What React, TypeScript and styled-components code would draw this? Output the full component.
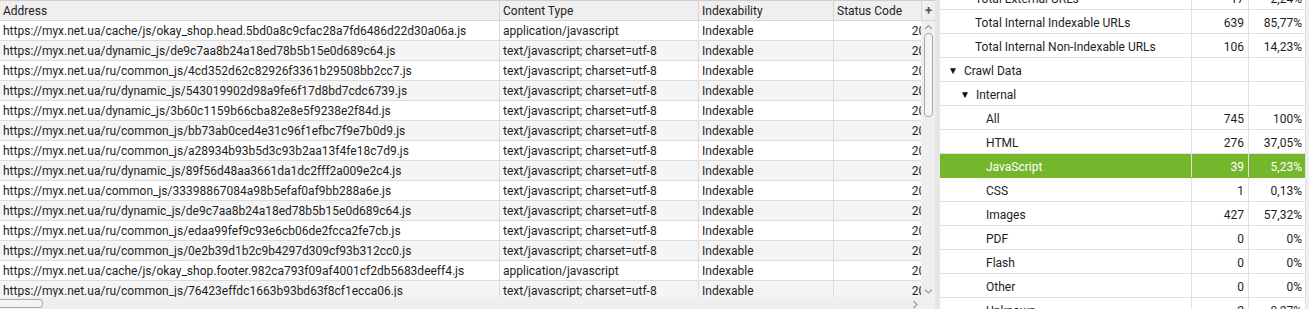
import React from 'react';
import styled, { createGlobalStyle, css } from 'styled-components';

const GlobalStyle = createGlobalStyle`
  html, body {
    margin: 0;
    padding: 0;
    overflow: hidden;
    background: #f0f0f0;
  }
  body {
    font-family: Roboto, "Liberation Sans", Arial, sans-serif;
    font-size: 12px;
    color: #1e1e1e;
  }
`;

const COLS = '500px 199px 135px 103px';

const Page = styled.div`
  display: flex;
  width: 1309px;
  height: 309px;
  background: #f0f0f0;
`;

const LeftPane = styled.div`
  display: flex;
  flex-direction: column;
  width: 935px;
  flex-shrink: 0;
`;

const TableArea = styled.div`
  display: flex;
  height: 297px;
`;

const Viewport = styled.div`
  width: 921px;
  overflow: hidden;
  background: #fff;
`;

const HeaderRow = styled.div`
  display: grid;
  grid-template-columns: ${COLS};
  height: 21px;
  box-sizing: border-box;
  border-top: 1px solid #cfcfcf;
  border-bottom: 1px solid #d6d6d6;
  background: #efefef;
`;

const HeaderCell = styled.div`
  display: flex;
  align-items: center;
  padding: 1px 3px 0;
  border-right: 1px solid #d6d6d6;
  color: #222;
  white-space: nowrap;
  overflow: hidden;
`;

const Row = styled.div<{ $alt: boolean }>`
  display: grid;
  grid-template-columns: ${COLS};
  height: 20px;
  box-sizing: border-box;
  border-bottom: 1px solid #dcdcdc;
  background: ${(p) => (p.$alt ? '#f5f5f5' : '#fff')};
`;

const Cell = styled.div<{ $right?: boolean }>`
  display: flex;
  align-items: center;
  justify-content: ${(p) => (p.$right ? 'flex-end' : 'flex-start')};
  padding: 1px 4px 0 3px;
  border-right: 1px solid #dcdcdc;
  white-space: nowrap;
  overflow: hidden;
`;

const VScroll = styled.div`
  width: 14px;
  display: flex;
  flex-direction: column;
`;

const PlusCell = styled.div`
  height: 21px;
  box-sizing: border-box;
  border-top: 1px solid #cfcfcf;
  border-bottom: 1px solid #d6d6d6;
  border-left: 1px solid #d6d6d6;
  background: #efefef;
  display: flex;
  align-items: center;
  justify-content: center;
  color: #555;
  font-size: 13px;
  font-weight: 700;
`;

const VTrack = styled.div`
  flex: 1;
  display: flex;
  flex-direction: column;
  align-items: center;
  background: #efefef;
  padding: 1px 0 1px;
`;

const Arrow = styled.div`
  height: 10px;
  display: flex;
  align-items: center;
  justify-content: center;
`;

const VThumb = styled.div`
  width: 9px;
  height: 84px;
  margin-top: 1px;
  box-sizing: border-box;
  border: 1px solid #a9a9a9;
  border-radius: 4px;
  background: #f4f4f4;
`;

const Spacer = styled.div`
  flex: 1;
`;

const HScroll = styled.div`
  height: 12px;
  display: flex;
`;

const HTrack = styled.div`
  width: 921px;
  display: flex;
  align-items: center;
  background: #efefef;
`;

const HThumb = styled.div`
  width: 43px;
  height: 9px;
  box-sizing: border-box;
  border: 1px solid #a9a9a9;
  border-left: none;
  border-radius: 0 4px 4px 0;
  background: #f4f4f4;
`;

const HArrow = styled.div`
  width: 12px;
  display: flex;
  justify-content: center;
  padding-top: 2px;
`;

const Splitter = styled.div`
  width: 5px;
  flex-shrink: 0;
  background: #e6e6e6;
`;

const RightPane = styled.div`
  width: 365px;
  flex-shrink: 0;
  background: #fff;
  overflow: hidden;
`;

const RightBody = styled.div`
  margin-top: -14px;
`;

const StatRow = styled.div<{ $selected?: boolean }>`
  display: grid;
  grid-template-columns: 252px 57px 56px;
  height: 24px;
  box-sizing: border-box;
  border-bottom: 1px solid #e0e0e0;
  ${(p) =>
    p.$selected &&
    css`
      background: #74b72d;
      color: #fff;
      border-bottom-color: #74b72d;
    `}
`;

const StatLabel = styled.div<{ $indent: number }>`
  display: flex;
  align-items: center;
  padding: 2px 0 0 ${(p) => p.$indent}px;
  white-space: nowrap;
  overflow: hidden;
  border-right: 1px solid #e0e0e0;
`;

const StatValue = styled.div<{ $last?: boolean }>`
  display: flex;
  align-items: center;
  justify-content: flex-end;
  padding: 2px ${(p) => (p.$last ? 3 : 4)}px 0 0;
  border-right: ${(p) => (p.$last ? 'none' : '1px solid #e0e0e0')};
`;

const Caret = styled.span`
  font-size: 10px;
  margin-right: 6px;
  color: #111;
`;

const SideEdge = styled.div`
  flex: 1;
  background: #f0f0f0;
  border-left: 1px solid #e2e2e2;
`;

type UrlRow = { url: string; type: string };

const rows: UrlRow[] = [
  { url: 'https://myx.net.ua/cache/js/okay_shop.head.5bd0a8c9cfac28a7fd6486d22d30a06a.js', type: 'application/javascript' },
  { url: 'https://myx.net.ua/dynamic_js/de9c7aa8b24a18ed78b5b15e0d689c64.js', type: 'text/javascript; charset=utf-8' },
  { url: 'https://myx.net.ua/ru/common_js/4cd352d62c82926f3361b29508bb2cc7.js', type: 'text/javascript; charset=utf-8' },
  { url: 'https://myx.net.ua/ru/dynamic_js/543019902d98a9fe6f17d8bd7cdc6739.js', type: 'text/javascript; charset=utf-8' },
  { url: 'https://myx.net.ua/dynamic_js/3b60c1159b66cba82e8e5f9238e2f84d.js', type: 'text/javascript; charset=utf-8' },
  { url: 'https://myx.net.ua/ru/common_js/bb73ab0ced4e31c96f1efbc7f9e7b0d9.js', type: 'text/javascript; charset=utf-8' },
  { url: 'https://myx.net.ua/ru/common_js/a28934b93b5d3c93b2aa13f4fe18c7d9.js', type: 'text/javascript; charset=utf-8' },
  { url: 'https://myx.net.ua/ru/dynamic_js/89f56d48aa3661da1dc2fff2a009e2c4.js', type: 'text/javascript; charset=utf-8' },
  { url: 'https://myx.net.ua/common_js/33398867084a98b5efaf0af9bb288a6e.js', type: 'text/javascript; charset=utf-8' },
  { url: 'https://myx.net.ua/ru/dynamic_js/de9c7aa8b24a18ed78b5b15e0d689c64.js', type: 'text/javascript; charset=utf-8' },
  { url: 'https://myx.net.ua/ru/common_js/edaa99fef9c93e6cb06de2fcca2fe7cb.js', type: 'text/javascript; charset=utf-8' },
  { url: 'https://myx.net.ua/ru/common_js/0e2b39d1b2c9b4297d309cf93b312cc0.js', type: 'text/javascript; charset=utf-8' },
  { url: 'https://myx.net.ua/cache/js/okay_shop.footer.982ca793f09af4001cf2db5683deeff4.js', type: 'application/javascript' },
  { url: 'https://myx.net.ua/ru/common_js/76423effdc1663b93bd63f8cf1ecca06.js', type: 'text/javascript; charset=utf-8' },
];

type Stat = { label: string; count: string; pct: string; indent: number; caret?: boolean; selected?: boolean };

const stats: Stat[] = [
  { label: 'Total External URLs', count: '17', pct: '2,24%', indent: 35 },
  { label: 'Total Internal Indexable URLs', count: '639', pct: '85,77%', indent: 35 },
  { label: 'Total Internal Non-Indexable URLs', count: '106', pct: '14,23%', indent: 35 },
  { label: 'Crawl Data', count: '', pct: '', indent: 8, caret: true },
  { label: 'Internal', count: '', pct: '', indent: 20, caret: true },
  { label: 'All', count: '745', pct: '100%', indent: 46 },
  { label: 'HTML', count: '276', pct: '37,05%', indent: 46 },
  { label: 'JavaScript', count: '39', pct: '5,23%', indent: 46, selected: true },
  { label: 'CSS', count: '1', pct: '0,13%', indent: 46 },
  { label: 'Images', count: '427', pct: '57,32%', indent: 46 },
  { label: 'PDF', count: '0', pct: '0%', indent: 46 },
  { label: 'Flash', count: '0', pct: '0%', indent: 46 },
  { label: 'Other', count: '0', pct: '0%', indent: 46 },
  { label: 'Unknown', count: '2', pct: '0,27%', indent: 46 },
];

const Chevron: React.FC<{ dir: 'up' | 'down' | 'right' }> = ({ dir }) => {
  const d = dir === 'up' ? 'M1 5 L4.5 1.5 L8 5' : dir === 'down' ? 'M1 1.5 L4.5 5 L8 1.5' : 'M1.5 1 L5 4.5 L1.5 8';
  const w = dir === 'right' ? 7 : 9;
  const h = dir === 'right' ? 9 : 7;
  return (
    <svg width={w} height={h} viewBox={`0 0 ${w} ${h}`}>
      <path d={d} fill="none" stroke="#9a9a9a" strokeWidth="1.1" />
    </svg>
  );
};

const App: React.FC = () => {
  return (
    <Page>
      <GlobalStyle />
      <LeftPane>
        <TableArea>
          <Viewport>
            <HeaderRow>
              <HeaderCell>Address</HeaderCell>
              <HeaderCell>Content Type</HeaderCell>
              <HeaderCell>Indexability</HeaderCell>
              <HeaderCell>Status Code</HeaderCell>
            </HeaderRow>
            {rows.map((r, i) => (
              <Row key={i} $alt={i % 2 === 1}>
                <Cell>{r.url}</Cell>
                <Cell>{r.type}</Cell>
                <Cell>Indexable</Cell>
                <Cell $right>200</Cell>
              </Row>
            ))}
          </Viewport>
          <VScroll>
            <PlusCell>+</PlusCell>
            <VTrack>
              <Arrow>
                <Chevron dir="up" />
              </Arrow>
              <VThumb />
              <Spacer />
              <Arrow>
                <Chevron dir="down" />
              </Arrow>
            </VTrack>
          </VScroll>
        </TableArea>
        <HScroll>
          <HTrack>
            <HThumb />
            <Spacer />
            <HArrow>
              <Chevron dir="right" />
            </HArrow>
          </HTrack>
          <Spacer />
        </HScroll>
      </LeftPane>
      <Splitter />
      <RightPane>
        <RightBody>
          {stats.map((s, i) => (
            <StatRow key={i} $selected={s.selected}>
              <StatLabel $indent={s.indent}>
                {s.caret && <Caret>▼</Caret>}
                {s.label}
              </StatLabel>
              <StatValue>{s.count}</StatValue>
              <StatValue $last>{s.pct}</StatValue>
            </StatRow>
          ))}
        </RightBody>
      </RightPane>
      <SideEdge />
    </Page>
  );
};

export default App;
